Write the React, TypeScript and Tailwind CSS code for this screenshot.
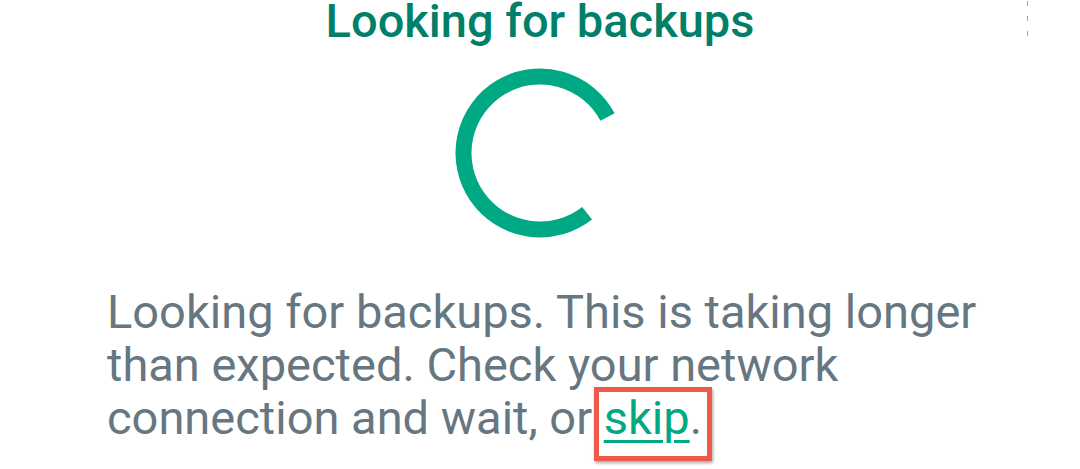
import React from 'react';

// Spinner arc: gap on the right side, square ends
function Spinner() {
  const r = 76.5;
  const cx = 85;
  const cy = 85;
  const a1 = (52 * Math.PI) / 180;
  const a2 = (-28 * Math.PI) / 180;
  const x1 = cx + r * Math.cos(a1);
  const y1 = cy + r * Math.sin(a1);
  const x2 = cx + r * Math.cos(a2);
  const y2 = cy + r * Math.sin(a2);
  return (
    <svg width="170" height="170" viewBox="0 0 170 170">
      <path
        d={`M ${x1} ${y1} A ${r} ${r} 0 1 1 ${x2} ${y2}`}
        fill="none"
        stroke="#00a884"
        strokeWidth="16"
        strokeLinecap="butt"
      />
    </svg>
  );
}

export default function App() {
  return (
    <div className="relative w-[1080px] h-[469px] overflow-hidden bg-white font-['Roboto',sans-serif]">
      {/* overflow menu dots, cut off */}
      <div className="absolute right-[52px] top-0 flex flex-col gap-[10px] pt-[1px]">
        <span className="block w-[1px] h-[5px] bg-[#9aa4ab]" />
        <span className="block w-[1px] h-[5px] bg-[#9aa4ab]" />
        <span className="block w-[1px] h-[5px] bg-[#9aa4ab]" />
      </div>

      <div className="flex flex-col items-center">
        <h1 className="text-[47px] leading-[42px] font-medium text-[#008069]">
          Looking for backups
        </h1>
        <div className="mt-[26px]">
          <Spinner />
        </div>
      </div>

      <p className="mt-[47px] ml-[107px] w-[900px] text-[47px] leading-[53px] text-[#667781]">
        Looking for backups. This is taking longer than expected. Check your network connection and wait, or{' '}
        <span className="relative inline-block">
          <span className="text-[#00a884] underline decoration-[3px] underline-offset-[6px]">skip</span>
          <span className="absolute left-[-10px] right-[-22px] top-[-4px] bottom-[-17px] border-[5px] border-[#f05a4a] shadow-[1px_2px_3px_rgba(0,0,0,0.35)]" />
        </span>
        .
      </p>
    </div>
  );
}
